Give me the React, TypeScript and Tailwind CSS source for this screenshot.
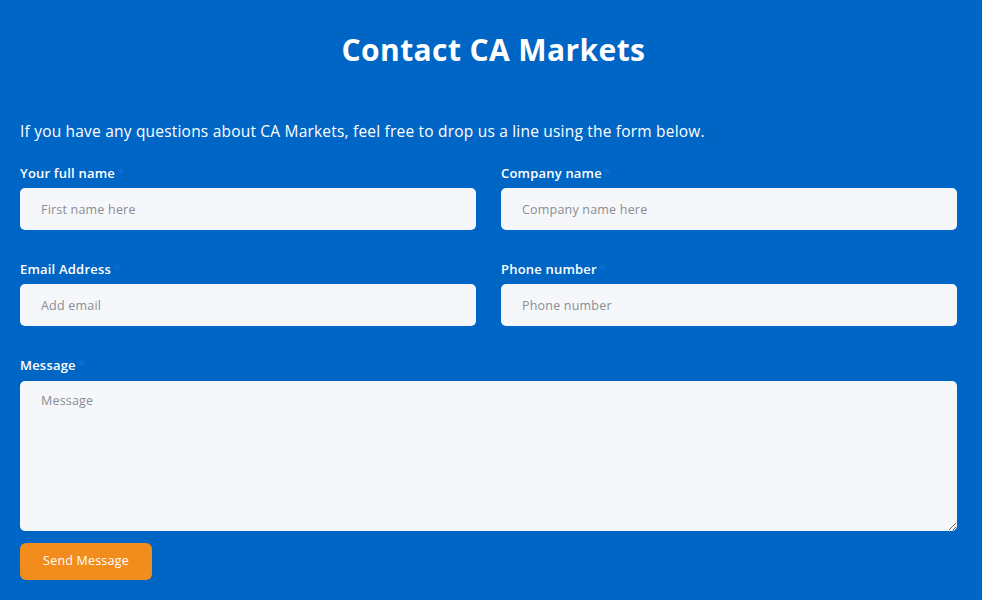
import React from "react";

const font = { fontFamily: '"Open Sans", "Noto Sans", sans-serif' };

function Label({ children }: { children: React.ReactNode }) {
  return (
    <div className="h-5 leading-5 text-[13px] font-semibold text-white tracking-[0.2px]">
      {children}
      <span className="text-[#0a6fd6] ml-0.5">*</span>
    </div>
  );
}

function Field({ label, placeholder }: { label: string; placeholder: string }) {
  return (
    <div className="flex flex-col">
      <Label>{label}</Label>
      <input
        placeholder={placeholder}
        className="mt-[5px] h-[42px] w-full rounded-[5px] bg-[#f5f7fb] pl-[21px] text-[12.5px] tracking-[0.2px] text-[#333] placeholder:text-[#8a8d92] outline-none"
      />
    </div>
  );
}

export default function App() {
  return (
    <div className="min-h-[600px] w-full bg-[#0066c6] pl-5 pr-[25px] pt-8" style={font}>
      <h1 className="ml-[10px] text-center text-[30px] leading-9 font-bold text-white tracking-[0.4px]">Contact CA Markets</h1>
      <p className="mt-[51px] h-6 leading-6 text-[15.5px] text-white tracking-[0.2px]">
        If you have any questions about CA Markets, feel free to drop us a line using the form below.
      </p>
      <div className="mt-5 grid grid-cols-2 gap-x-[25px] gap-y-[29px]">
        <Field label="Your full name" placeholder="First name here" />
        <Field label="Company name" placeholder="Company name here" />
        <Field label="Email Address" placeholder="Add email" />
        <Field label="Phone number" placeholder="Phone number" />
      </div>
      <div className="mt-[29px] flex flex-col">
        <Label>Message</Label>
        <textarea
          placeholder="Message"
          className="mt-[6px] h-[150px] w-full rounded-[5px] bg-[#f5f7fb] pl-[21px] pt-[11px] text-[12.5px] tracking-[0.2px] text-[#333] placeholder:text-[#8a8d92] outline-none resize-y"
        />
      </div>
      <button className="mt-3 h-[37px] w-[132px] rounded-[6px] bg-[#f28c1c] text-[12.5px] font-medium text-white tracking-[0.2px]">
        Send Message
      </button>
    </div>
  );
}
